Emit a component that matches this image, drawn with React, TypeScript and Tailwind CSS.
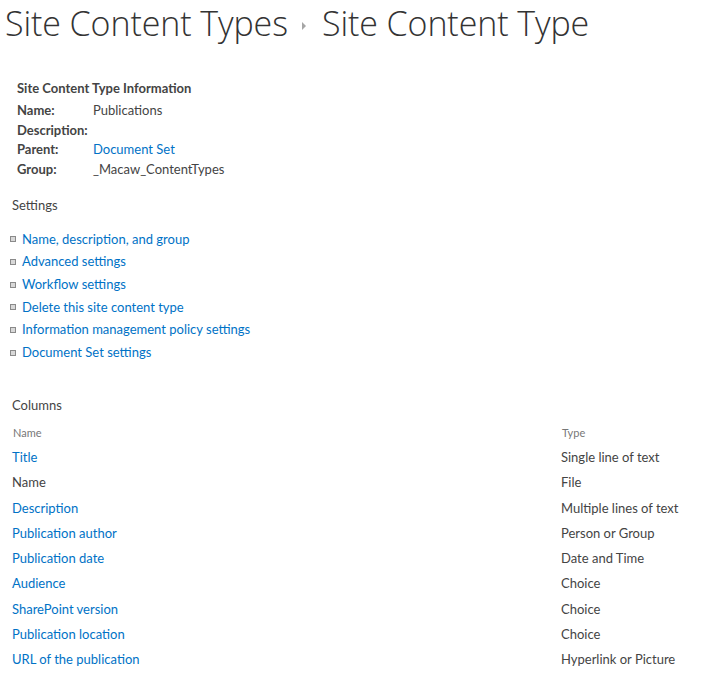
const info = [
    { label: 'Name:', value: 'Publications' },
    { label: 'Description:', value: '' },
    { label: 'Parent:', value: 'Document Set', link: true },
    { label: 'Group:', value: '_Macaw_ContentTypes' },
];

const settings = [
    'Name, description, and group',
    'Advanced settings',
    'Workflow settings',
    'Delete this site content type',
    'Information management policy settings',
    'Document Set settings',
];

const columns = [
    { name: 'Title', type: 'Single line of text', link: true },
    { name: 'Name', type: 'File', link: false },
    { name: 'Description', type: 'Multiple lines of text', link: true },
    { name: 'Publication author', type: 'Person or Group', link: true },
    { name: 'Publication date', type: 'Date and Time', link: true },
    { name: 'Audience', type: 'Choice', link: true },
    { name: 'SharePoint version', type: 'Choice', link: true },
    { name: 'Publication location', type: 'Choice', link: true },
    { name: 'URL of the publication', type: 'Hyperlink or Picture', link: true },
];

export default function App() {
    return (
        <div
            className="w-[719px] h-[681px] bg-white text-[#444] overflow-hidden"
            style={{ fontFamily: 'Lato, "Open Sans", sans-serif' }}
        >
            <h1
                className="flex items-center pl-[5px] pt-[3px] h-[44px] text-[34px] font-light text-[#333] tracking-[-0.1px]"
                style={{ fontFamily: '"Open Sans", sans-serif' }}
            >
                <span>Site Content Types</span>
                <span className="ml-[14px] mr-[16px] mt-[4px] w-0 h-0 border-y-[4px] border-y-transparent border-l-[4px] border-l-[#a6a6a6]" />
                <span>Site Content Type</span>
            </h1>

            <div className="pl-[17px] pt-[32px] text-[13px]">
                <div className="font-bold h-[25px] leading-[25px]">Site Content Type Information</div>
                {info.map((row) => (
                    <div key={row.label} className="flex h-[19.5px] leading-[19.5px]">
                        <span className="w-[76px] font-bold">{row.label}</span>
                        <span className={row.link ? 'text-[#0072c6]' : ''}>{row.value}</span>
                    </div>
                ))}
            </div>

            <div className="pl-[12px] pt-[14px] text-[13px] leading-[24px]">Settings</div>
            <ul className="pl-[10px] pt-[11px] text-[13px]">
                {settings.map((s) => (
                    <li key={s} className="flex items-center h-[22.7px]">
                        <span className="w-[6px] h-[6px] border border-[#8a8a8a] bg-[#d8d8d8] mr-[6px]" />
                        <span className="text-[#0072c6]">{s}</span>
                    </li>
                ))}
            </ul>

            <div className="pl-[12px] pt-[29px] text-[13px] leading-[24px]">Columns</div>
            <div className="pl-[12px] pr-[12px] pt-[5px]">
                <div className="flex h-[23px] items-center text-[11px] text-[#777]">
                    <span className="w-[549px] pl-[1px]">Name</span>
                    <span className="pl-[1px]">Type</span>
                </div>
                {columns.map((c) => (
                    <div key={c.name} className="flex h-[25.25px] items-center text-[13px]">
                        <span className={`w-[549px] ${c.link ? 'text-[#0072c6]' : 'text-[#444]'}`}>{c.name}</span>
                        <span>{c.type}</span>
                    </div>
                ))}
            </div>
        </div>
    );
}
